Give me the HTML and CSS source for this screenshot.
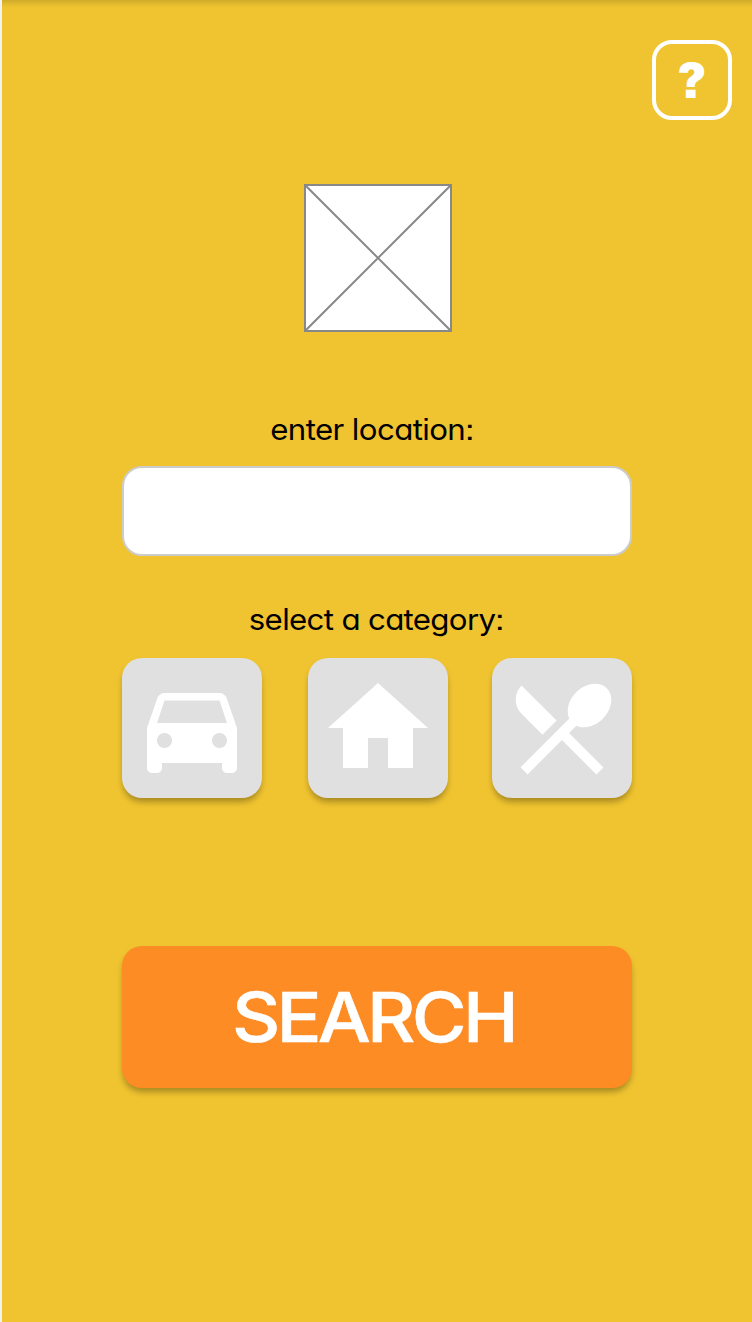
FILE: index.html
```html
<!DOCTYPE html>
<html lang="en">
<head>
<meta charset="utf-8">
<title>Search</title>
<link rel="stylesheet" href="styles.css">
</head>
<body>
<main class="screen">
  <header class="topbar"><button class="help"><span class="help-mark">?</span></button></header>
  <svg class="logo" viewBox="0 0 148 148"><path d="M1 1h146v146H1zM1 1l146 146M147 1L1 147"/></svg>
  <label class="label location-label" for="location"><span class="location-text">enter location:</span></label>
  <input class="location" id="location" type="text">
  <div class="label category-label"><span class="category-text">select a category:</span></div>
  <div class="categories">
    <button class="category"><svg viewBox="0 0 24 24"><path d="M18.92 6.01C18.72 5.42 18.16 5 17.5 5h-11c-.66 0-1.21.42-1.42 1.01L3 12v8c0 .55.45 1 1 1h1c.55 0 1-.45 1-1v-1h12v1c0 .55.45 1 1 1h1c.55 0 1-.45 1-1v-8l-2.08-5.99zM6.5 16c-.83 0-1.5-.67-1.5-1.5S5.67 13 6.5 13s1.5.67 1.5 1.5S7.33 16 6.5 16zm11 0c-.83 0-1.5-.67-1.5-1.5s.67-1.5 1.5-1.5 1.5.67 1.5 1.5-.67 1.5-1.5 1.5zM5 11l1.5-4.5h11L19 11H5z"/></svg></button>
    <button class="category home"><svg viewBox="0 0 24 24"><path d="M10 20v-6h4v6h5v-8h3L12 3 2 12h3v8z"/></svg></button>
    <button class="category"><svg viewBox="0 0 24 24"><path d="M8.1 13.34l2.83-2.83L3.91 3.5c-1.56 1.56-1.56 4.09 0 5.66l4.19 4.18zm6.78-1.81c1.53.71 3.68.21 5.27-1.38 1.91-1.91 2.28-4.65.81-6.12-1.46-1.46-4.2-1.1-6.12.81-1.59 1.59-2.09 3.74-1.38 5.27L3.7 19.87l1.41 1.41L12 14.41l6.88 6.88 1.41-1.41L13.41 13l1.47-1.47z"/></svg></button>
  </div>
  <button class="search"><span class="search-text">SEARCH</span></button>
</main>
</body>
</html>
```
FILE: styles.css
```css
* { box-sizing: border-box; }
body { margin: 0; background: #f0c430; font-family: Inter, "Liberation Sans", sans-serif; }
button { padding: 0; border: 0; font-family: inherit; }
.screen {
  display: flex; flex-direction: column; align-items: center;
  width: 752px; height: 1322px; padding-left: 2px;
  border-left: 2px solid #f2f2f2;
  background: linear-gradient(rgba(0,0,0,.14), rgba(0,0,0,.05) 4px, transparent 8px) #f0c430;
}
.topbar { display: flex; justify-content: flex-end; width: 100%; padding: 40px 20px 0 0; }
.help {
  display: flex; align-items: center; justify-content: center;
  width: 80px; height: 80px; border: 4px solid #fff; border-radius: 20px;
  background: transparent; color: #fff;
}
.help-mark { font-size: 48px; font-weight: 900; line-height: 72px; padding-top: 1px; font-feature-settings: "ss07"; }
.logo { width: 148px; height: 148px; margin-top: 64px; background: #fff; fill: none; stroke: #888; stroke-width: 2; }
.label { height: 40px; font-size: 29.5px; font-weight: 400; line-height: 41px; color: #000; white-space: nowrap; font-feature-settings: "cv11", "ss07"; }
.label span { display: inline-block; transform: scaleX(1.06); }
.location-label { margin-top: 77px; margin-right: 12px; }
.location-text { letter-spacing: -.6px; }
.location { width: 510px; height: 90px; margin-top: 17px; margin-right: 2px; border: 2px solid #ccc; border-radius: 20px; background: #fff; }
.category-label { margin-top: 43px; margin-right: 4px; }
.category-text { letter-spacing: -.65px; }
.categories { display: flex; justify-content: space-between; width: 510px; margin-top: 19px; margin-right: 2px; }
.category { width: 140px; height: 140px; padding: 10px; border-radius: 20px; background: #e0e0e0; box-shadow: 0 5px 6px -1px rgba(0,0,0,.3); }
.home { margin-left: 2px; }
.category svg { display: block; width: 120px; height: 120px; fill: #fff; }
.search {
  width: 510px; height: 142px; margin-top: 148px; margin-right: 2px;
  border-radius: 20px; background: #fd8c25; color: #fff; box-shadow: 0 5px 6px -1px rgba(0,0,0,.3);
}
.search-text {
  display: inline-block; font-size: 69px; font-weight: 500; line-height: 142px; letter-spacing: -3.5px;
  -webkit-text-stroke: .5px #fff;
  transform: translate(-4px, 0) scaleX(1.085);
}
```
